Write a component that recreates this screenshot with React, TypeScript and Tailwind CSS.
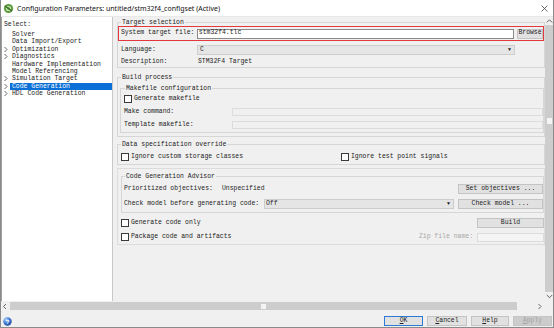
import React from "react";

function Cb() {
  return <span className="inline-block w-[8px] h-[8px] border border-[#3a3a3a] bg-white shrink-0" />;
}

function Chevron({ dir }: { dir: "l" | "r" | "u" | "d" }) {
  const d =
    dir === "l" ? "M4 1 L1.5 3.5 L4 6" : dir === "r" ? "M1.5 1 L4 3.5 L1.5 6" : dir === "u" ? "M0.8 4.5 L3.5 1.8 L6.2 4.5" : "M0.8 2 L3.5 4.7 L6.2 2";
  return (
    <svg width="7" height="7" viewBox="0 0 7 7" className="block">
      <path d={d} stroke="#555" strokeWidth="0.9" fill="none" />
    </svg>
  );
}

function Group({
  label,
  className = "",
  labelLeft = "left-[3px]",
  children,
}: {
  label: string;
  className?: string;
  labelLeft?: string;
  children?: React.ReactNode;
}) {
  return (
    <div className={`relative border border-[#d6d6d6] ${className}`}>
      <span className={`absolute top-[-4px] ${labelLeft} bg-[#f0f0f0] px-[1px] leading-[7px] whitespace-nowrap`}>{label}</span>
      {children}
    </div>
  );
}

function Btn({ label, className = "" }: { label: React.ReactNode; className?: string }) {
  return (
    <div className={`h-[10px] bg-[#e1e1e1] border border-[#c4c4c4] flex items-center justify-center leading-none ${className}`}>
      {label}
    </div>
  );
}

const tree: { t: string; arrow?: boolean; sel?: boolean }[] = [
  { t: "Solver" },
  { t: "Data Import/Export" },
  { t: "Optimization", arrow: true },
  { t: "Diagnostics", arrow: true },
  { t: "Hardware Implementation" },
  { t: "Model Referencing" },
  { t: "Simulation Target", arrow: true },
  { t: "Code Generation", arrow: true, sel: true },
  { t: "HDL Code Generation", arrow: true },
];

export default function App() {
  return (
    <div className="w-[554px] h-[328px] bg-[#f0f0f0] flex flex-col overflow-hidden border-l border-r border-b border-[#8a8a8a] text-[#222] font-['Liberation_Mono',monospace] text-[6.45px] leading-none">
      {/* Title bar */}
      <div className="h-[17px] bg-white flex items-center shrink-0 border-b border-[#e8e8e8]">
        <div className="ml-[2px] w-[11px] h-[11px]">
          <svg width="11" height="11" viewBox="0 0 11 11">
            <circle cx="5.5" cy="5.5" r="4.6" fill="#5d9b3e" />
            <circle cx="5.5" cy="5.5" r="2.6" fill="#cfe6b8" />
            <path d="M2 3 L5.5 5.5 L9 8" stroke="#2f6d1e" strokeWidth="1.2" />
            <circle cx="5.5" cy="5.5" r="1.2" fill="#3b7f26" />
          </svg>
        </div>
        <span className="ml-[3px] font-['Noto_Sans',sans-serif] text-[7px] text-[#111] whitespace-nowrap">
          Configuration Parameters: untitled/stm32f4_configset (Active)
        </span>
        <div className="ml-auto mr-[5px]">
          <svg width="7" height="7" viewBox="0 0 7 7">
            <path d="M0.5 0.5 L6.5 6.5 M6.5 0.5 L0.5 6.5" stroke="#444" strokeWidth="0.8" />
          </svg>
        </div>
      </div>

      {/* Main */}
      <div className="flex h-[284px] shrink-0">
        {/* Tree */}
        <div className="w-[112px] shrink-0 bg-white border-l border-l-[#a0a0a0] border-r border-r-[#c8c8c8] pt-[4px] flex flex-col">
          <div className="h-[8px] leading-[8px] pl-[2px]">Select:</div>
          <div className="mt-[2px] flex flex-col">
            {tree.map((it) => (
              <div key={it.t} className="h-[7.375px] flex">
                <div className="w-[8px] flex items-center justify-center">{it.arrow ? <Chevron dir="r" /> : null}</div>
                <div
                  className={`flex-1 h-[7.375px] leading-[7.4px] pl-[2px] whitespace-nowrap ${
                    it.sel ? "bg-[#0a6fd6] text-white" : ""
                  }`}
                >
                  {it.t}
                </div>
              </div>
            ))}
          </div>
        </div>

        {/* Right panel */}
        <div className="w-[432px] shrink-0 pl-[4px] flex flex-col">
          {/* Target selection */}
          <Group label="Target selection" className="mt-[5px] h-[46px]">
            <div className="mt-[3px] h-[15px] border border-[#e3383d] flex items-center pl-[2px]">
              <div className="w-[76px] whitespace-nowrap">System target file:</div>
              <div className="w-[318px] h-[10px] bg-white border border-[#8a8a8a] flex items-center pl-[1px]">stm32f4.tlc</div>
              <Btn label="Browse" className="ml-[3px] w-[26px]" />
            </div>
            <div className="mt-[4px] h-[10px] flex items-center pl-[3px]">
              <div className="w-[76px]">Language:</div>
              <div className="w-[318px] h-[10px] bg-[#e5e5e5] border border-[#cdcdcd] flex items-center pl-[2px] pr-[3px]">
                <span>C</span>
                <span className="ml-auto text-[5px]">▼</span>
              </div>
            </div>
            <div className="mt-[3px] h-[8px] flex items-center pl-[3px]">
              <div className="w-[76px]">Description:</div>
              <div className="pl-[1px]">STM32F4 Target</div>
            </div>
          </Group>

          {/* Build process */}
          <Group label="Build process" className="mt-[9px] h-[60px]">
            <Group label="Makefile configuration" labelLeft="left-[4px]" className="mt-[10px] ml-[2px] h-[45px]">
              <div className="mt-[6px] h-[8px] flex items-center pl-[3px] gap-[2px]">
                <Cb />
                <span>Generate makefile</span>
              </div>
              <div className="mt-[5px] h-[8px] flex items-center pl-[3px]">
                <div className="w-[108px]">Make command:</div>
                <div className="flex-1 h-[8px] border border-[#dcdcdc]" />
              </div>
              <div className="mt-[5px] h-[8px] flex items-center pl-[3px]">
                <div className="w-[108px]">Template makefile:</div>
                <div className="flex-1 h-[8px] border border-[#dcdcdc]" />
              </div>
            </Group>
          </Group>

          {/* Data specification override */}
          <Group label="Data specification override" className="mt-[7px] h-[21px]">
            <div className="mt-[8px] h-[8px] flex items-center pl-[3px]">
              <div className="w-[220px] flex items-center gap-[2px]">
                <Cb />
                <span>Ignore custom storage classes</span>
              </div>
              <div className="flex items-center gap-[2px]">
                <Cb />
                <span>Ignore test point signals</span>
              </div>
            </div>
          </Group>

          {/* Outer box */}
          <div className="mt-[3px] h-[77px] border border-[#dcdcdc] flex flex-col">
            <Group label="Code Generation Advisor" className="mt-[7px] ml-[3px] h-[37px]">
              <div className="mt-[7px] h-[10px] flex items-center pl-[2px]">
                <div className="w-[98px] whitespace-nowrap">Prioritized objectives:</div>
                <div>Unspecified</div>
                <Btn label="Set objectives ..." className="ml-auto w-[85px]" />
              </div>
              <div className="mt-[5px] h-[10px] flex items-center pl-[2px]">
                <div className="w-[140px] whitespace-nowrap">Check model before generating code:</div>
                <div className="flex-1 h-[10px] bg-[#e5e5e5] border border-[#cdcdcd] flex items-center pl-[1px] pr-[3px]">
                  <span>Off</span>
                  <span className="ml-auto text-[5px]">▼</span>
                </div>
                <Btn label="Check model ..." className="ml-[4px] w-[85px]" />
              </div>
            </Group>
            <div className="mt-[5px] h-[10px] flex items-center pl-[3px]">
              <Cb />
              <span className="ml-[2px]">Generate code only</span>
              <Btn label="Build" className="ml-auto w-[67px]" />
            </div>
            <div className="mt-[4px] h-[10px] flex items-center pl-[3px]">
              <Cb />
              <span className="ml-[2px]">Package code and artifacts</span>
              <span className="ml-auto mr-[4px] text-[#a8a8a8]">Zip file name:</span>
              <div className="w-[67px] h-[9px] border border-[#dcdcdc] bg-[#f4f4f4]" />
            </div>
          </div>
        </div>

        {/* Vertical scrollbar */}
        <div className="w-[8px] shrink-0 flex flex-col">
          <div className="h-[8px] flex items-center justify-center">
            <Chevron dir="u" />
          </div>
          <div className="flex-1 bg-[#cdcdcd] flex flex-col">
            <div className="mt-[93px] mx-auto w-[5px] h-[6px] bg-[#f4f4f4]" />
          </div>
          <div className="h-[9px] flex items-center justify-center">
            <Chevron dir="d" />
          </div>
        </div>
      </div>

      {/* Horizontal scrollbar */}
      <div className="h-[10px] shrink-0 flex items-center">
        <div className="w-[9px] flex justify-center">
          <Chevron dir="l" />
        </div>
        <div className="w-[507px] h-[8px] bg-[#cdcdcd] flex items-center">
          <div className="ml-[251px] w-[5px] h-[5px] bg-[#f4f4f4]" />
        </div>
        <div className="ml-auto mr-[9px]">
          <Chevron dir="r" />
        </div>
      </div>

      {/* Bottom buttons */}
      <div className="h-[16px] shrink-0 flex items-start">
        <div className="ml-[2px] mt-[6px]">
          <svg width="9" height="9" viewBox="0 0 9 9">
            <defs>
              <radialGradient id="hg" cx="0.35" cy="0.3" r="0.8">
                <stop offset="0" stopColor="#b9d8ff" />
                <stop offset="0.5" stopColor="#3b78d8" />
                <stop offset="1" stopColor="#1a3f8f" />
              </radialGradient>
            </defs>
            <circle cx="4.5" cy="4.5" r="4.2" fill="url(#hg)" />
            <text x="4.5" y="6.8" fontSize="6" textAnchor="middle" fill="#fff" fontFamily="Liberation Sans, sans-serif" fontWeight="bold">?</text>
          </svg>
        </div>
        <div className="ml-auto mr-[1px] mt-[5px] flex gap-[4px]">
          <div className="w-[39px] h-[10px] border border-[#2b7bd6] bg-[#e1e1e1] flex items-center justify-center">
            <span><span className="underline">O</span>K</span>
          </div>
          <Btn className="w-[40px]" label={<span><span className="underline">C</span>ancel</span>} />
          <Btn className="w-[38px]" label={<span><span className="underline">H</span>elp</span>} />
          <div className="w-[39px] h-[10px] border border-[#c4c4c4] bg-[#cccccc] text-[#a0a0a0] flex items-center justify-center">
            <span><span className="underline">A</span>pply</span>
          </div>
        </div>
      </div>
    </div>
  );
}
